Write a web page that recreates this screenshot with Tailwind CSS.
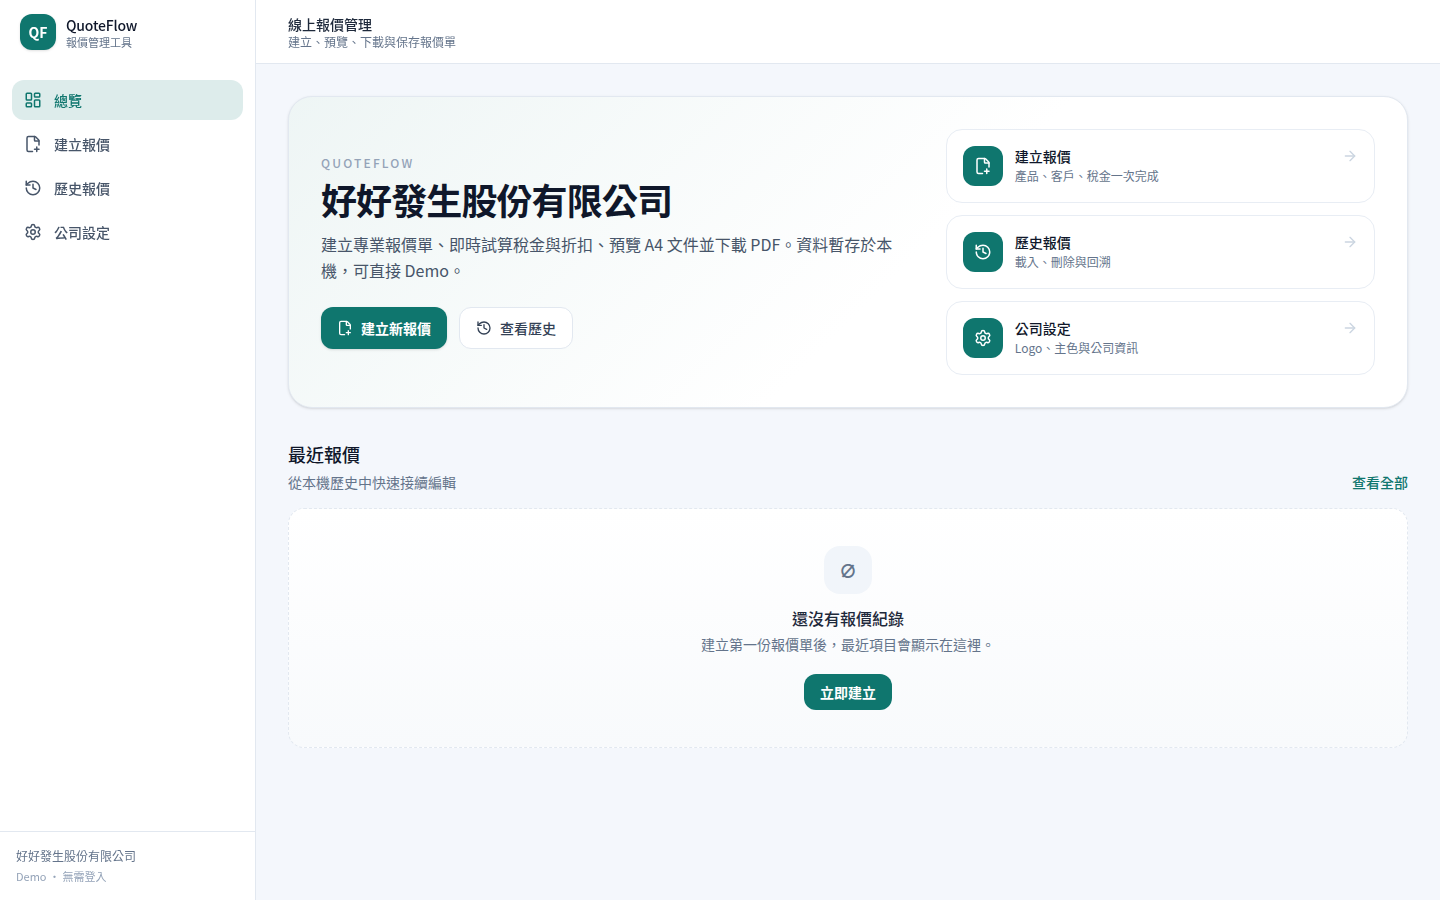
<!DOCTYPE html>
<html lang="zh-Hant">
<head>
  <meta charset="UTF-8">
  <meta name="viewport" content="width=device-width, initial-scale=1.0">
  <title>QuoteFlow</title>
  <script src="https://cdn.jsdelivr.net/npm/@tailwindcss/browser@4"></script>
</head>
<body class="bg-[#f4f7fc] font-['Noto_Sans_CJK_TC',sans-serif] text-[#0f172a]">
  <!-- Icons -->
  <svg class="hidden">
    <symbol id="icon-dashboard" viewBox="0 0 24 24">
      <rect width="7" height="9" x="3" y="3" rx="1"/>
      <rect width="7" height="5" x="14" y="3" rx="1"/>
      <rect width="7" height="9" x="14" y="12" rx="1"/>
      <rect width="7" height="5" x="3" y="16" rx="1"/>
    </symbol>
    <symbol id="icon-file-plus" viewBox="0 0 24 24">
      <path d="M11.35 22H6a2 2 0 0 1-2-2V4a2 2 0 0 1 2-2h8a2.4 2.4 0 0 1 1.706.706l3.588 3.588A2.4 2.4 0 0 1 20 8v5.35"/>
      <path d="M14 2v5a1 1 0 0 0 1 1h5"/>
      <path d="M14 19h6"/>
      <path d="M17 16v6"/>
    </symbol>
    <symbol id="icon-history" viewBox="0 0 24 24">
      <path d="M3 12a9 9 0 1 0 9-9 9.75 9.75 0 0 0-6.74 2.74L3 8"/>
      <path d="M3 3v5h5"/>
      <path d="M12 7v5l4 2"/>
    </symbol>
    <symbol id="icon-settings" viewBox="0 0 24 24">
      <path d="M9.671 4.136a2.34 2.34 0 0 1 4.659 0 2.34 2.34 0 0 0 3.319 1.915 2.34 2.34 0 0 1 2.33 4.033 2.34 2.34 0 0 0 0 3.831 2.34 2.34 0 0 1-2.33 4.033 2.34 2.34 0 0 0-3.319 1.915 2.34 2.34 0 0 1-4.659 0 2.34 2.34 0 0 0-3.32-1.915 2.34 2.34 0 0 1-2.33-4.033 2.34 2.34 0 0 0 0-3.831A2.34 2.34 0 0 1 6.35 6.051a2.34 2.34 0 0 0 3.319-1.915"/>
      <circle cx="12" cy="12" r="3"/>
    </symbol>
    <symbol id="icon-arrow" viewBox="0 0 24 24">
      <path d="M5 12h14"/>
      <path d="m12 5 7 7-7 7"/>
    </symbol>
  </svg>

  <div class="flex h-screen">
    <!-- Sidebar -->
    <aside class="flex w-64 shrink-0 flex-col border-r border-[#e2e8f0] bg-white/95 backdrop-blur">
      <div class="flex h-16 items-center gap-2.5 px-5">
        <div class="flex size-9 items-center justify-center rounded-xl bg-[#0f766e] text-sm font-bold text-white shadow-sm">QF</div>
        <div>
          <p class="-mt-px text-sm leading-5 font-medium tracking-[-0.015em]">QuoteFlow</p>
          <p class="mt-px text-[11px] leading-3 text-[#64748b]">報價管理工具</p>
        </div>
      </div>
      <nav class="flex flex-1 flex-col gap-1 px-3 py-4 text-sm font-medium text-[#475569]">
        <a href="#" class="flex h-10 items-center gap-3 rounded-xl bg-[#0f766e]/14 px-3 text-[#0f766e]">
          <svg class="size-[18px] fill-none stroke-current stroke-2" stroke-linecap="round" stroke-linejoin="round"><use href="#icon-dashboard"/></svg>
          總覽
        </a>
        <a href="#" class="flex h-10 items-center gap-3 rounded-xl px-3">
          <svg class="size-[18px] fill-none stroke-current stroke-2" stroke-linecap="round" stroke-linejoin="round"><use href="#icon-file-plus"/></svg>
          建立報價
        </a>
        <a href="#" class="flex h-10 items-center gap-3 rounded-xl px-3">
          <svg class="size-[18px] fill-none stroke-current stroke-2" stroke-linecap="round" stroke-linejoin="round"><use href="#icon-history"/></svg>
          歷史報價
        </a>
        <a href="#" class="flex h-10 items-center gap-3 rounded-xl px-3">
          <svg class="size-[18px] fill-none stroke-current stroke-2" stroke-linecap="round" stroke-linejoin="round"><use href="#icon-settings"/></svg>
          公司設定
        </a>
      </nav>
      <div class="border-t border-[#e2e8f0] p-4 text-xs">
        <p class="text-[#64748b]">好好發生股份有限公司</p>
        <p class="mt-1 text-[11px] leading-4 text-[#94a3b8]">Demo ・ 無需登入</p>
      </div>
    </aside>

    <div class="flex min-w-0 flex-1 flex-col">
      <header class="flex h-16 shrink-0 items-center border-b border-[#e2e8f0] bg-white/95 px-8 backdrop-blur">
        <div>
          <p class="text-sm font-medium text-[#1e293b]">線上報價管理</p>
          <p class="text-xs text-[#64748b]">建立、預覽、下載與保存報價單</p>
        </div>
      </header>

      <main class="flex flex-col gap-8 p-8">
        <!-- Hero -->
        <section class="grid grid-cols-[1.4fr_1fr] items-center gap-6 rounded-3xl border border-[#e2e8f0] bg-white bg-[linear-gradient(135deg,#0f766e12_0%,#ffffff_55%)] p-8 shadow-sm">
          <div>
            <p class="text-xs font-medium tracking-[0.18em] text-[#94a3b8]">QUOTEFLOW</p>
            <h1 class="mt-2 text-4xl font-bold tracking-tight">好好發生股份有限公司</h1>
            <p class="mt-3 max-w-xl text-base leading-[26px] text-[#475569]">建立專業報價單、即時試算稅金與折扣、預覽 A4 文件並下載 PDF。資料暫存於本機，可直接 Demo。</p>
            <div class="mt-6 flex gap-3 text-sm">
              <button class="flex items-center gap-2 rounded-xl bg-[#0f766e] px-4 py-2.5 font-bold text-white shadow-sm">
                <svg class="size-4 fill-none stroke-current stroke-2" stroke-linecap="round" stroke-linejoin="round"><use href="#icon-file-plus"/></svg>
                建立新報價
              </button>
              <button class="flex items-center gap-2 rounded-xl border border-[#e2e8f0] bg-white px-4 py-2.5 font-medium text-[#334155]">
                <svg class="size-4 fill-none stroke-current stroke-2" stroke-linecap="round" stroke-linejoin="round"><use href="#icon-history"/></svg>
                查看歷史
              </button>
            </div>
          </div>
          <div class="flex flex-col gap-3">
            <a href="#" class="flex items-start gap-3 rounded-2xl border border-[#e8edf4] bg-white p-4">
              <span class="flex size-10 items-center justify-center rounded-xl bg-[#0f766e] text-white">
                <svg class="size-[18px] fill-none stroke-current stroke-2" stroke-linecap="round" stroke-linejoin="round"><use href="#icon-file-plus"/></svg>
              </span>
              <div class="flex-1">
                <p class="text-sm font-medium">建立報價</p>
                <p class="mt-0.5 text-xs text-[#64748b]">產品、客戶、稅金一次完成</p>
              </div>
              <svg class="mt-0.5 size-4 fill-none stroke-[#cbd5e1] stroke-2" stroke-linecap="round" stroke-linejoin="round"><use href="#icon-arrow"/></svg>
            </a>
            <a href="#" class="flex items-start gap-3 rounded-2xl border border-[#e8edf4] bg-white p-4">
              <span class="flex size-10 items-center justify-center rounded-xl bg-[#0f766e] text-white">
                <svg class="size-[18px] fill-none stroke-current stroke-2" stroke-linecap="round" stroke-linejoin="round"><use href="#icon-history"/></svg>
              </span>
              <div class="flex-1">
                <p class="text-sm font-medium">歷史報價</p>
                <p class="mt-0.5 text-xs text-[#64748b]">載入、刪除與回溯</p>
              </div>
              <svg class="mt-0.5 size-4 fill-none stroke-[#cbd5e1] stroke-2" stroke-linecap="round" stroke-linejoin="round"><use href="#icon-arrow"/></svg>
            </a>
            <a href="#" class="flex items-start gap-3 rounded-2xl border border-[#e8edf4] bg-white p-4">
              <span class="flex size-10 items-center justify-center rounded-xl bg-[#0f766e] text-white">
                <svg class="size-[18px] fill-none stroke-current stroke-2" stroke-linecap="round" stroke-linejoin="round"><use href="#icon-settings"/></svg>
              </span>
              <div class="flex-1">
                <p class="text-sm font-medium">公司設定</p>
                <p class="mt-0.5 text-xs text-[#64748b]">Logo、主色與公司資訊</p>
              </div>
              <svg class="mt-0.5 size-4 fill-none stroke-[#cbd5e1] stroke-2" stroke-linecap="round" stroke-linejoin="round"><use href="#icon-arrow"/></svg>
            </a>
          </div>
        </section>

        <!-- Recent quotes -->
        <section>
          <div class="mb-4 flex items-end justify-between">
            <div>
              <h2 class="text-lg font-medium">最近報價</h2>
              <p class="mt-1 text-sm text-[#64748b]">從本機歷史中快速接續編輯</p>
            </div>
            <a href="#" class="text-sm font-medium text-[#0f766e]">查看全部</a>
          </div>
          <div class="flex min-h-60 flex-col items-center justify-center rounded-2xl border border-dashed border-[#e2e8f0] bg-linear-to-b from-white to-[#f8fafc]">
            <div class="flex size-12 items-center justify-center rounded-2xl bg-[#f1f5fa] text-lg font-semibold text-[#64748b]">∅</div>
            <h3 class="mt-3 text-base font-medium text-[#1e293b]">還沒有報價紀錄</h3>
            <p class="mt-1 text-sm text-[#64748b]">建立第一份報價單後，最近項目會顯示在這裡。</p>
            <button class="mt-5 h-9 rounded-xl bg-[#0f766e] px-4 text-sm font-bold text-white">立即建立</button>
          </div>
        </section>
      </main>
    </div>
  </div>
</body>
</html>
